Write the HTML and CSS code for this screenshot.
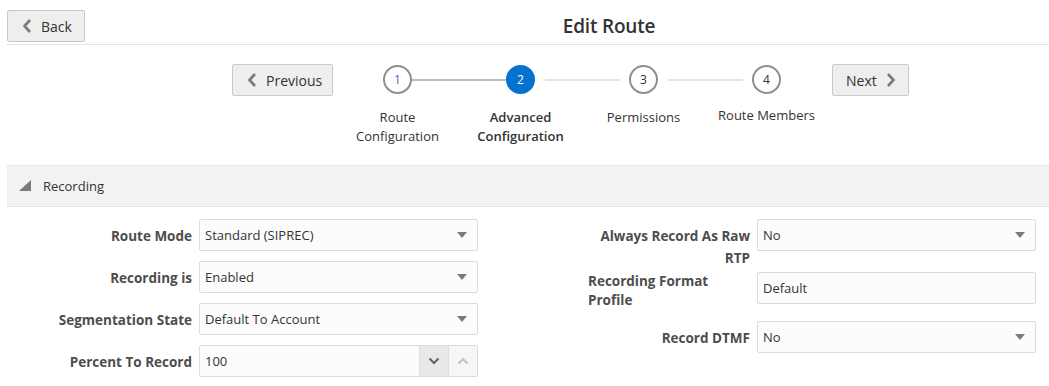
FILE: index.html
```html
<!DOCTYPE html>
<html lang="en">
<head>
<meta charset="utf-8">
<title>Edit Route</title>
<link rel="stylesheet" href="styles.css">
</head>
<body>
<div class="page">
  <header class="topbar">
    <button class="btn btn-back" type="button">
      <svg class="chev" viewBox="0 0 10 16" width="10" height="16"><path d="M8 2 L2.5 8 L8 14" fill="none" stroke="#7a7a7a" stroke-width="2.6"/></svg>
      <span>Back</span>
    </button>
    <h1 class="title">Edit Route</h1>
  </header>

  <nav class="train">
    <button class="btn btn-prev" type="button">
      <svg class="chev" viewBox="0 0 10 16" width="10" height="16"><path d="M8 2 L2.5 8 L8 14" fill="none" stroke="#7a7a7a" stroke-width="2.6"/></svg>
      <span>Previous</span>
    </button>
    <ol class="steps">
      <li class="step step-visited"><span class="circle">1</span><span class="step-label">Route<br>Configuration</span></li>
      <li class="step step-current"><span class="circle">2</span><span class="step-label">Advanced<br>Configuration</span></li>
      <li class="step"><span class="circle">3</span><span class="step-label">Permissions</span></li>
      <li class="step step-last"><span class="circle">4</span><span class="step-label step-label-up">Route Members</span></li>
    </ol>
    <button class="btn btn-next" type="button">
      <span>Next</span>
      <svg class="chev" viewBox="0 0 10 16" width="10" height="16"><path d="M2 2 L7.5 8 L2 14" fill="none" stroke="#7a7a7a" stroke-width="2.6"/></svg>
    </button>
  </nav>

  <section class="panel">
    <div class="panel-head">
      <svg class="tri" viewBox="0 0 12 12" width="12" height="12"><polygon points="12,0 12,11 0,11" fill="#7a7a7a"/></svg>
      <span>Recording</span>
    </div>
    <div class="form">
      <div class="col">
        <div class="row">
          <label class="lbl">Route Mode</label>
          <div class="field select"><span>Standard (SIPREC)</span><i class="caret"></i></div>
        </div>
        <div class="row">
          <label class="lbl">Recording is</label>
          <div class="field select"><span>Enabled</span><i class="caret"></i></div>
        </div>
        <div class="row">
          <label class="lbl">Segmentation State</label>
          <div class="field select"><span>Default To Account</span><i class="caret"></i></div>
        </div>
        <div class="row">
          <label class="lbl">Percent To Record</label>
          <div class="field number">
            <span class="num-val">100</span>
            <span class="spin spin-down"><svg viewBox="0 0 12 8" width="12" height="8"><path d="M1.5 1.5 L6 6 L10.5 1.5" fill="none" stroke="#666" stroke-width="2.2"/></svg></span>
            <span class="spin spin-up"><svg viewBox="0 0 12 8" width="12" height="8"><path d="M1.5 6.5 L6 2 L10.5 6.5" fill="none" stroke="#c4c4c4" stroke-width="2.2"/></svg></span>
          </div>
        </div>
      </div>
      <div class="col">
        <div class="row row-raw">
          <label class="lbl">Always Record As Raw RTP</label>
          <div class="field select"><span>No</span><i class="caret"></i></div>
        </div>
        <div class="row row-profile">
          <label class="lbl lbl-top">Recording Format Profile</label>
          <div class="field text"><span>Default</span></div>
        </div>
        <div class="row">
          <label class="lbl">Record DTMF</label>
          <div class="field select"><span>No</span><i class="caret"></i></div>
        </div>
      </div>
    </div>
  </section>
</div>
</body>
</html>
```

FILE: styles.css
```css
* { box-sizing: border-box; }

html, body {
  margin: 0;
  padding: 0;
  background: #ffffff;
  overflow: hidden;
}

body {
  font-family: "Open Sans", "Noto Sans", sans-serif;
  color: #333333;
  font-size: 13px;
}

.page {
  padding-left: 7px;
}

/* ---------- top bar ---------- */
.topbar {
  display: flex;
  align-items: center;
  padding: 10px 0 2px 0;
  border-bottom: 1px solid #e3e3e3;
}

.btn {
  display: inline-flex;
  align-items: center;
  gap: 9px;
  height: 32px;
  padding: 0 14px;
  background: #eeeeee;
  border: 1px solid #c8c8c8;
  border-radius: 2px;
  font-family: inherit;
  font-size: 14px;
  color: #333333;
  cursor: pointer;
}

.btn-back {
  width: 78px;
}

.chev {
  display: block;
  flex: none;
}

.title {
  flex: 1;
  margin: 0;
  padding-left: 84px;
  text-align: center;
  font-size: 19px;
  font-weight: 600;
  color: #333333;
  letter-spacing: -0.2px;
}

/* ---------- train ---------- */
.train {
  display: flex;
  justify-content: center;
  align-items: flex-start;
  padding: 19px 0 0 85px;
  height: 120px;
}

.btn-prev {
  width: 101px;
  margin-right: 3px;
}

.btn-next {
  width: 77px;
  margin-left: 4px;
  gap: 9px;
  padding-left: 13px;
}

.steps {
  display: flex;
  margin: 0;
  padding: 0;
  list-style: none;
}

.step {
  position: relative;
  width: 123px;
  display: flex;
  flex-direction: column;
  align-items: center;
  padding-top: 1px;
}

.step::after {
  content: "";
  position: absolute;
  top: 15px;
  left: calc(50% + 24px);
  width: 75px;
  height: 2px;
  background: #e4e4e4;
}

.step-visited::after {
  left: calc(50% + 14px);
  width: 95px;
  background: #bdbdbd;
}

.step-last::after {
  display: none;
}

.circle {
  width: 29px;
  height: 29px;
  border: 2px solid #8f8f8f;
  border-radius: 50%;
  display: flex;
  align-items: center;
  justify-content: center;
  font-size: 12px;
  color: #333333;
  background: #ffffff;
}

.step-visited .circle {
  color: #5b5bb5;
}

.step-current .circle {
  background: #0572ce;
  border-color: #0572ce;
  color: #ffffff;
}

.step-label {
  margin-top: 14px;
  font-size: 13px;
  line-height: 19px;
  text-align: center;
  color: #333333;
}

.step-current .step-label {
  font-weight: 600;
}

.step-label-up {
  margin-top: 12px;
}

/* ---------- panel ---------- */
.panel-head {
  display: flex;
  align-items: center;
  gap: 12px;
  height: 42px;
  padding-left: 12px;
  background: #f2f2f2;
  border-top: 1px solid #e6e6e6;
  border-bottom: 1px solid #e3e3e3;
  font-size: 13px;
  color: #333333;
}

.tri {
  display: block;
  margin-top: -1px;
}

.form {
  display: flex;
  gap: 110px;
  padding: 12px 0 0 23px;
}

.col {
  display: flex;
  flex-direction: column;
  gap: 10px;
}

.row {
  display: flex;
  align-items: flex-start;
  gap: 7px;
}

.lbl {
  width: 162px;
  padding-top: 6px;
  font-size: 13.5px;
  line-height: 22px;
  font-weight: 700;
  color: #4d4d4d;
  text-align: right;
}

.row-raw {
  margin-bottom: -7px;
}

.row-profile {
  margin-bottom: 1px;
}

.lbl-top {
  padding-top: 0;
  line-height: 19px;
  text-align: left;
}

.field {
  position: relative;
  display: flex;
  align-items: center;
  width: 279px;
  height: 32px;
  padding-left: 5px;
  background: #fcfcfc;
  border: 1px solid #dcdcdc;
  border-radius: 2px;
  font-size: 13px;
  color: #333333;
}

.select span,
.text span,
.num-val {
  flex: 1;
}

.caret {
  width: 0;
  height: 0;
  margin-right: 10px;
  border-left: 5px solid transparent;
  border-right: 5px solid transparent;
  border-top: 6px solid #7a7a7a;
}

.number {
  padding-right: 0;
}

.spin {
  display: flex;
  align-items: center;
  justify-content: center;
  width: 29px;
  height: 100%;
  border-left: 1px solid #dcdcdc;
}

.spin svg {
  display: block;
}

.spin-down {
  background: #e8e8e8;
}

.spin-up {
  background: #f6f6f6;
}
```
